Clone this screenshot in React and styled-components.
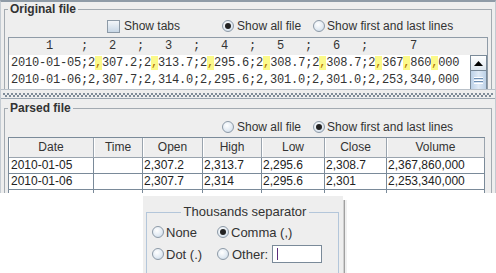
import React from 'react';
import styled, { createGlobalStyle } from 'styled-components';

const Global = createGlobalStyle`
  html, body { margin: 0; padding: 0; background: #ffffff; }
  body {
    font-family: "Liberation Sans", Arial, sans-serif;
    font-size: 12px;
    color: #333333;
  }
`;

const Page = styled.div`
  width: 496px;
  height: 273px;
  overflow: hidden;
  background: #ffffff;
`;

const Window = styled.div`
  box-sizing: border-box;
  width: 496px;
  height: 193px;
  background: #eeeeee;
  border-top: 2px solid #8f9ba7;
  border-left: 1px solid #c4cbd2;
  border-right: 1px solid #c4cbd2;
  display: flex;
  flex-direction: column;
  overflow: hidden;
`;

const Pane = styled.div`
  box-sizing: border-box;
  flex: none;
  height: ${p => p.$h}px;
  padding: ${p => p.$top || 0}px 3px 0 3px;
  overflow: hidden;
`;

const Divider = styled.div`
  flex: none;
  box-sizing: border-box;
  height: 10px;
  border-top: 1px solid #b9c1c9;
  border-bottom: 1px solid #9aa5b0;
  padding: 3px 2px 0 2px;
  &::before {
    content: '';
    display: block;
    height: 4px;
    background-image: radial-gradient(circle at 1px 1px, #7f8c99 0.8px, transparent 0.9px),
      radial-gradient(circle at 3px 3px, #7f8c99 0.8px, transparent 0.9px);
    background-size: 4px 4px;
  }
`;

const Titled = styled.fieldset`
  margin: 0;
  padding: 0 ${p => p.$padR || 0}px 0 ${p => p.$padL || 0}px;
  min-width: 0;
  height: ${p => p.$h || 200}px;
  box-sizing: border-box;
  border: 1px solid ${p => p.$color || '#a3aab1'};
`;

const Legend = styled.legend`
  padding: 0 ${p => p.$pad ?? 2}px;
  margin: ${p => (p.$center ? '0 auto' : '0 0 0 3px')};
  font-weight: ${p => (p.$bold ? 'bold' : 'normal')};
  font-size: ${p => p.$size || 12}px;
  line-height: ${p => p.$lh || 14}px;
  color: #333333;
  white-space: nowrap;
`;

const OptionsRow = styled.div`
  display: flex;
  align-items: center;
  height: 16px;
  margin-top: ${p => p.$mt}px;
  padding-left: ${p => p.$pl}px;
`;

const Option = styled.label`
  display: flex;
  align-items: center;
  gap: ${p => p.$gap ?? 3}px;
  margin-left: ${p => p.$ml || 0}px;
  white-space: nowrap;
  font-size: ${p => p.$size || 12}px;
  color: #333333;
`;

const CheckBox = styled.span`
  box-sizing: border-box;
  flex: none;
  width: 13px;
  height: 13px;
  border: 1px solid #8d9aa7;
  background: linear-gradient(#f3f6f9, #c8d7e6);
`;

const Radio = styled.span`
  box-sizing: border-box;
  flex: none;
  width: 12px;
  height: 12px;
  border-radius: 50%;
  border: 1px solid #8d9aa7;
  background: radial-gradient(circle at 40% 35%, #ffffff 0%, #e3ebf3 55%, #c3d3e3 100%);
  display: inline-flex;
  align-items: center;
  justify-content: center;
  &::after {
    content: '';
    display: ${p => (p.$on ? 'block' : 'none')};
    width: 6px;
    height: 6px;
    border-radius: 50%;
    background: #222222;
  }
`;

const TextArea = styled.div`
  margin: 3px 3px 0 3px;
  border-top: 1px solid #8f9ba7;
  border-left: 1px solid #8f9ba7;
  border-right: 1px solid #8f9ba7;
  font-family: "Liberation Mono", "Courier New", monospace;
  font-size: 12px;
  letter-spacing: -0.2px;
  color: #333333;
`;

const MonoHeader = styled.div`
  height: 17px;
  line-height: 17px;
  padding-left: 2px;
  white-space: pre;
  background: #eeeeee;
`;

const TextBody = styled.div`
  display: flex;
  background: #ffffff;
`;

const Lines = styled.div`
  flex: 1;
  padding-left: 2px;
`;

const MonoLine = styled.div`
  height: 17px;
  line-height: 17px;
  white-space: pre;
`;

const Hi = styled.span`
  background: #fbf98a;
  color: #b07000;
`;

const VScroll = styled.div`
  flex: none;
  width: 17px;
  box-sizing: border-box;
  display: flex;
  flex-direction: column;
  background: #eeeeee;
`;

const ArrowButton = styled.div`
  box-sizing: border-box;
  height: 16px;
  border: 1px solid #7a8a99;
  background: linear-gradient(#ffffff, #dde6ef);
  display: flex;
  align-items: center;
  justify-content: center;
`;

const Thumb = styled.div`
  box-sizing: border-box;
  height: 40px;
  border: 1px solid #7a8a99;
  border-top: none;
  background: linear-gradient(90deg, #bdd2e8, #dfeaf6 50%, #bcd1e7);
  display: flex;
  justify-content: center;
  padding-top: 6px;
`;

const Grip = styled.span`
  width: 9px;
  height: 7px;
  background: repeating-linear-gradient(#ffffff 0 1px, #6e8fb3 1px 2px, transparent 2px 3px);
`;

const Grid = styled.div`
  display: grid;
  grid-template-columns: 85px 49px 60px 59px 63px 62px 98px;
  width: max-content;
  margin: 2px 0 0 3px;
  border-left: 1px solid #7a8a99;
  border-top: 1px solid #7a8a99;
`;

const HeadCell = styled.div`
  box-sizing: border-box;
  height: 20px;
  line-height: 19px;
  text-align: center;
  background: #eeeeee;
  border-right: 1px solid #9aa4ae;
  border-bottom: 1px solid #9aa4ae;
  box-shadow: inset 1px 0 0 #ffffff;
  font-size: 12px;
  color: #333333;
  white-space: nowrap;
  overflow: hidden;
`;

const Cell = styled.div`
  box-sizing: border-box;
  height: 16px;
  line-height: 15px;
  padding-left: ${p => p.$pad ?? 1}px;
  background: #ffffff;
  border-right: 1px solid #7a8a99;
  border-bottom: 1px solid #7a8a99;
  font-size: 12px;
  color: #222222;
  white-space: nowrap;
  overflow: hidden;
`;

const Fragment = styled.div`
  display: flex;
  margin: 3px 0 0 143px;
`;

const SepPanel = styled.div`
  box-sizing: border-box;
  width: 200px;
  height: 77px;
  overflow: hidden;
  background: #eeeeee;
  padding: 8px 4px 0 3px;
`;

const Edge = styled.div`
  box-sizing: border-box;
  width: 4px;
  height: 73px;
  margin-top: 4px;
  background: #e2e2e2;
  border-left: 1px solid #d0d0d0;
  border-right: 2px solid #f0f0f0;
  box-shadow: inset -1px 0 0 #a0a0a0;
`;

const SepGrid = styled.div`
  display: grid;
  grid-template-columns: 65px auto;
  grid-template-rows: 16px 18px;
  row-gap: 5px;
  margin-top: 4px;
`;

const TextField = styled.div`
  box-sizing: border-box;
  width: 50px;
  height: 18px;
  margin-left: 1px;
  background: #ffffff;
  border: 1px solid #7a8a99;
  padding: 2px 0 0 4px;
`;

const Caret = styled.span`
  display: block;
  width: 1px;
  height: 12px;
  background: #5b2d7a;
`;

const UpArrow = () => (
  <svg width="9" height="5" viewBox="0 0 9 5">
    <polygon points="0,5 4.5,0 9,5" fill="#000" />
  </svg>
);

const headerLine = '     1    ;   2   ;   3   ;   4   ;   5   ;   6   ;      7      ';

const columns = ['Date', 'Time', 'Open', 'High', 'Low', 'Close', 'Volume'];
const rows = [
  ['2010-01-05', '', '2,307.2', '2,313.7', '2,295.6', '2,308.7', '2,367,860,000'],
  ['2010-01-06', '', '2,307.7', '2,314', '2,295.6', '2,301', '2,253,340,000'],
  ['', '', '', '', '', '', ''],
];

export default function App() {
  return (
    <Page>
      <Global />
      <Window>
        <Pane $h={87}>
          <Titled $h={120}>
            <Legend $bold>Original file</Legend>
            <OptionsRow $mt={2} $pl={102}>
              <Option $gap={4}>
                <CheckBox />
                Show tabs
              </Option>
              <Option $ml={42}>
                <Radio $on />
                Show all file
              </Option>
              <Option $ml={12} $gap={2}>
                <Radio />
                Show first and last lines
              </Option>
            </OptionsRow>
            <TextArea>
              <MonoHeader>{headerLine}</MonoHeader>
              <TextBody>
                <Lines>
                  <MonoLine>
                    2010-01-05;2<Hi>,</Hi>307.2;2<Hi>,</Hi>313.7;2<Hi>,</Hi>295.6;2<Hi>,</Hi>308.7;2<Hi>,</Hi>308.7;2<Hi>,</Hi>367<Hi>,</Hi>860<Hi>,</Hi>000
                  </MonoLine>
                  <MonoLine>2010-01-06;2,307.7;2,314.0;2,295.6;2,301.0;2,301.0;2,253,340,000</MonoLine>
                </Lines>
                <VScroll>
                  <ArrowButton>
                    <UpArrow />
                  </ArrowButton>
                  <Thumb>
                    <Grip />
                  </Thumb>
                </VScroll>
              </TextBody>
            </TextArea>
          </Titled>
        </Pane>
        <Divider />
        <Pane $h={94} $top={2}>
          <Titled $h={120}>
            <Legend $bold>Parsed file</Legend>
            <OptionsRow $mt={4} $pl={217}>
              <Option>
                <Radio />
                Show all file
              </Option>
              <Option $ml={12} $gap={2}>
                <Radio $on />
                Show first and last lines
              </Option>
            </OptionsRow>
            <Grid>
              {columns.map(c => (
                <HeadCell key={c}>{c}</HeadCell>
              ))}
              {rows.map((r, i) =>
                r.map((v, j) => (
                  <Cell key={`${i}-${j}`} $pad={j === 0 ? 2 : 1}>
                    {v}
                  </Cell>
                ))
              )}
            </Grid>
          </Titled>
        </Pane>
      </Window>
      <Fragment>
        <SepPanel>
          <Titled $color="#b3c6da" $padL={5} $h={100}>
            <Legend $center $size={13} $lh={16} $pad={3}>
              Thousands separator
            </Legend>
            <SepGrid>
              <Option $size={13} $gap={2}>
                <Radio />
                None
              </Option>
              <Option $size={13} $gap={2}>
                <Radio $on />
                Comma (,)
              </Option>
              <Option $size={13} $gap={2}>
                <Radio />
                Dot (.)
              </Option>
              <Option $size={13} $gap={3}>
                <Radio />
                Other:
                <TextField>
                  <Caret />
                </TextField>
              </Option>
            </SepGrid>
          </Titled>
        </SepPanel>
        <Edge />
      </Fragment>
    </Page>
  );
}
